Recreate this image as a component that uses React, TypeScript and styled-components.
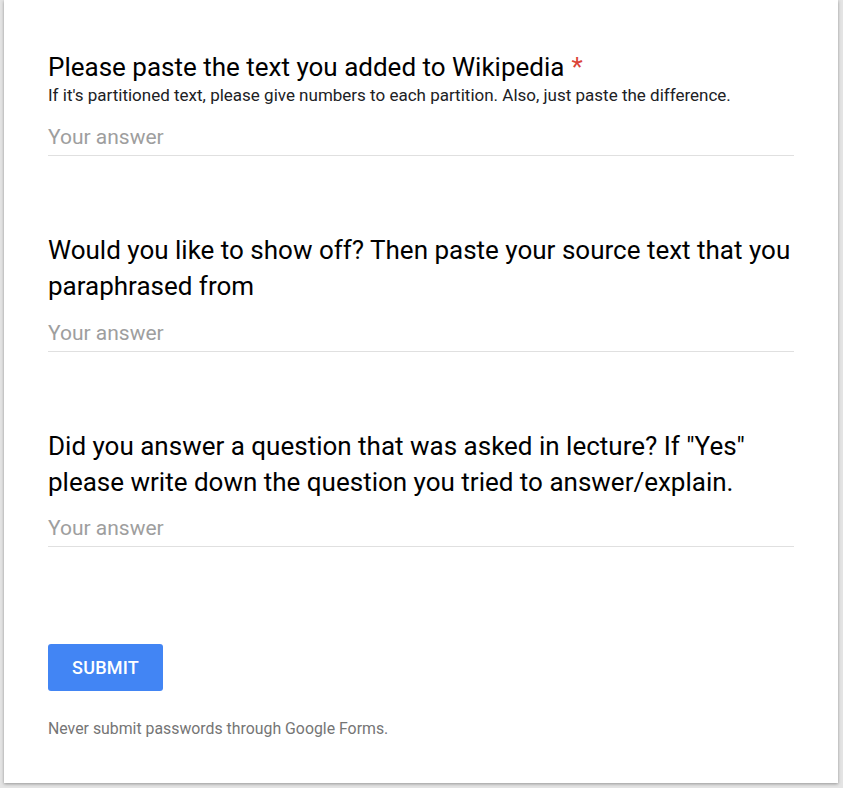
import React from "react";
import styled, { createGlobalStyle } from "styled-components";

const Global = createGlobalStyle`
  html, body { margin: 0; padding: 0; }
  body {
    background: #e4e4e4;
    font-family: Roboto, "Noto Sans", Arial, sans-serif;
  }
`;

const Page = styled.div`
  padding: 0 5px 5px 4px;
  height: 788px;
  box-sizing: border-box;
  overflow: hidden;
`;

const Card = styled.div`
  background: #fff;
  height: 783px;
  box-sizing: border-box;
  box-shadow: 0 1px 3px rgba(0, 0, 0, 0.35);
  padding: 49px 44px 0 44px;
  display: flex;
  flex-direction: column;
`;

const Question = styled.div`
  display: flex;
  flex-direction: column;
  margin-bottom: 76px;
`;

const Title = styled.div`
  font-size: 26px;
  line-height: 36px;
  color: #000;
`;

const Required = styled.span`
  color: #db4437;
  margin-left: 7px;
`;

const Desc = styled.div`
  font-size: 17px;
  line-height: 21px;
  color: #202124;
`;

const Answer = styled.div<{ $gap: number }>`
  margin-top: ${(p) => p.$gap}px;
  font-size: 21px;
  line-height: 28px;
  color: #9e9e9e;
  border-bottom: 1px solid #e0e0e0;
  padding-bottom: 4px;
`;

const Submit = styled.button`
  align-self: flex-start;
  width: 115px;
  height: 47px;
  margin-top: 21px;
  padding: 0;
  background: #4285f4;
  color: #fff;
  border: none;
  border-radius: 3px;
  font-family: Roboto, Arial, sans-serif;
  font-size: 18px;
  font-weight: 500;
  letter-spacing: 0.2px;
`;

const Footer = styled.div`
  margin-top: 28px;
  font-size: 15.85px;
  line-height: 19px;
  color: #757575;
`;

export default function App() {
  return (
    <>
      <Global />
      <Page>
        <Card>
          <Question>
            <Title>
              Please paste the text you added to Wikipedia<Required>*</Required>
            </Title>
            <Desc>
              If it's partitioned text, please give numbers to each partition. Also, just paste the difference.
            </Desc>
            <Answer $gap={17}>Your answer</Answer>
          </Question>
          <Question>
            <Title>
              Would you like to show off? Then paste your source text that you paraphrased from
            </Title>
            <Answer $gap={15}>Your answer</Answer>
          </Question>
          <Question>
            <Title>
              Did you answer a question that was asked in lecture? If "Yes" please write down the question you tried to answer/explain.
            </Title>
            <Answer $gap={14}>Your answer</Answer>
          </Question>
          <Submit>SUBMIT</Submit>
          <Footer>Never submit passwords through Google Forms.</Footer>
        </Card>
      </Page>
    </>
  );
}
